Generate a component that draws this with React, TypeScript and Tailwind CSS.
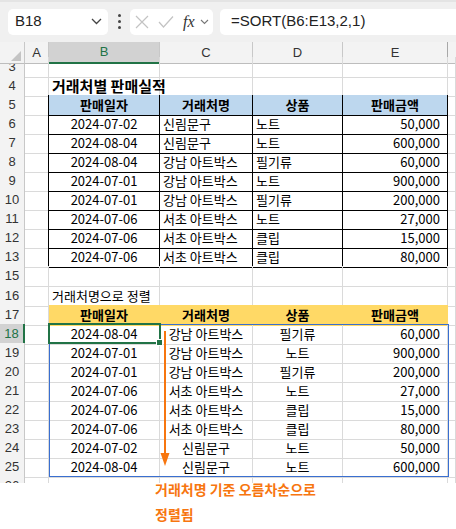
import React from "react";

type Cell = { t?: string; c?: string };

const COLS = "grid grid-cols-[25px_24px_111px_93px_90px_105px_8px]";
const G = "border-r border-b border-r-[#dadada] border-b-[#dadada]";
const KR = "font-['Noto_Sans_CJK_KR',sans-serif]";

const t1 = [
  ["2024-07-02", "신림문구", "노트", "50,000"],
  ["2024-08-04", "신림문구", "노트", "600,000"],
  ["2024-08-04", "강남 아트박스", "필기류", "60,000"],
  ["2024-07-01", "강남 아트박스", "노트", "900,000"],
  ["2024-07-01", "강남 아트박스", "필기류", "200,000"],
  ["2024-07-06", "서초 아트박스", "노트", "27,000"],
  ["2024-07-06", "서초 아트박스", "클립", "15,000"],
  ["2024-07-06", "서초 아트박스", "클립", "80,000"],
];

const t2 = [
  ["2024-08-04", "강남 아트박스", "필기류", "60,000"],
  ["2024-07-01", "강남 아트박스", "노트", "900,000"],
  ["2024-07-01", "강남 아트박스", "필기류", "200,000"],
  ["2024-07-06", "서초 아트박스", "노트", "27,000"],
  ["2024-07-06", "서초 아트박스", "클립", "15,000"],
  ["2024-07-06", "서초 아트박스", "클립", "80,000"],
  ["2024-07-02", "신림문구", "노트", "50,000"],
  ["2024-08-04", "신림문구", "노트", "600,000"],
];

function Row({
  n,
  cells,
  sel,
  h = "h-[19px]",
}: {
  n: string;
  cells: Cell[];
  sel?: boolean;
  h?: string;
}) {
  return (
    <div className={`${COLS} ${h}`}>
      <div
        className={
          sel
            ? "flex items-center justify-center border-b border-b-[#c8c8c8] border-r-2 border-r-[#217346] bg-[#d2d2d2] text-[13px] text-[#217346] font-['Liberation_Sans',sans-serif]"
            : "flex items-center justify-center border-b border-r border-b-[#d8d8d8] border-r-[#c8c8c8] bg-[#f3f3f3] text-[13px] text-[#333] font-['Liberation_Sans',sans-serif]"
        }
      >
        {n}
      </div>
      {cells.map((c, i) => (
        <div
          key={i}
          className={`flex items-center overflow-visible whitespace-nowrap text-[13px] leading-none text-black ${KR} ${
            c.c ?? G
          }`}
        >
          {c.t ?? ""}
        </div>
      ))}
    </div>
  );
}

const empty = (): Cell[] => [{}, {}, {}, {}, {}, {}];

const B1 = "border-r border-b border-black justify-center";
const L1 = "border-r border-b border-black justify-start pl-[3px]";
const R1 = "border-r border-b border-black justify-end pr-[7px]";

export default function App() {
  return (
    <div className="relative w-[456px] h-[529px] overflow-hidden bg-white">
      {/* formula bar */}
      <div className="h-[42px] bg-[#f0f0f0] border-t-2 border-t-[#e4e4e4] flex items-center gap-0 pb-[1px]">
        <div className="ml-[8px] w-[100px] h-[26px] bg-white rounded-[5px] flex items-center justify-between pl-[7px] pr-[6px]">
          <span className="text-[15px] text-[#222] font-['Liberation_Sans',sans-serif]">B18</span>
          <svg width="11" height="7" viewBox="0 0 11 7">
            <path d="M1 1 L5.5 5.5 L10 1" fill="none" stroke="#444" strokeWidth="1.3" />
          </svg>
        </div>
        <div className="w-[22px] h-[26px] flex flex-col items-center justify-center gap-[3px]">
          <div className="w-[3px] h-[3px] rounded-full bg-[#444]" />
          <div className="w-[3px] h-[3px] rounded-full bg-[#444]" />
          <div className="w-[3px] h-[3px] rounded-full bg-[#444]" />
        </div>
        <div className="w-[83px] h-[26px] bg-white rounded-[5px] flex items-center pl-[5px]">
          <svg width="14" height="14" viewBox="0 0 14 14">
            <path d="M1 1 L13 13 M13 1 L1 13" stroke="#c3c3c3" strokeWidth="1.2" />
          </svg>
          <svg width="16" height="14" viewBox="0 0 16 14" className="ml-[9px]">
            <path d="M1 7 L5.5 12 L15 1.5" fill="none" stroke="#c3c3c3" strokeWidth="1.2" />
          </svg>
          <span className="ml-[9px] text-[16px] italic text-[#333] font-['Liberation_Serif',serif] leading-none">fx</span>
          <svg width="9" height="6" viewBox="0 0 9 6" className="ml-[5px]">
            <path d="M1 1 L4.5 4.5 L8 1" fill="none" stroke="#777" strokeWidth="1.1" />
          </svg>
        </div>
        <div className="ml-[7px] flex-1 h-[26px] bg-white rounded-l-[5px] flex items-center pl-[11px]">
          <span className="text-[15px] text-[#222] font-['Liberation_Sans',sans-serif]">=SORT(B6:E13,2,1)</span>
        </div>
      </div>

      {/* sheet */}
      <div className="h-[441px] overflow-hidden">
        {/* column headers */}
        <div className={`${COLS} h-[15px] font-['Liberation_Sans',sans-serif] text-[13px] text-[#333]`}>
          <div className="relative bg-[#f3f3f3] border-r border-b border-r-[#c8c8c8] border-b-[#bdbdbd]">
            <svg width="10" height="10" viewBox="0 0 10 10" className="absolute right-[3px] bottom-[2px]">
              <path d="M10 0 L10 10 L0 10 Z" fill="#c4c4c4" />
            </svg>
          </div>
          <div className="flex items-center justify-center bg-[#f3f3f3] border-r border-b border-r-[#c8c8c8] border-b-[#bdbdbd]">A</div>
          <div className="flex items-center justify-center bg-[#d2d2d2] border-r border-r-[#c8c8c8] border-b-2 border-b-[#217346] text-[#217346]">B</div>
          <div className="flex items-center justify-center bg-[#f3f3f3] border-r border-b border-r-[#c8c8c8] border-b-[#bdbdbd]">C</div>
          <div className="flex items-center justify-center bg-[#f3f3f3] border-r border-b border-r-[#c8c8c8] border-b-[#bdbdbd]">D</div>
          <div className="flex items-center justify-center bg-[#f3f3f3] border-r border-b border-r-[#a8a8a8] border-b-[#bdbdbd]">E</div>
          <div className="bg-[#f3f3f3] border-b border-b-[#bdbdbd]" />
        </div>

        <Row n="3" cells={empty()} />
        <Row
          n="4"
          cells={[
            {},
            { t: "거래처별 판매실적", c: "border-r border-b border-r-[#dadada] border-b-black pl-[3px] text-[15px] font-bold" },
            { c: "border-r border-b border-r-[#dadada] border-b-black" },
            { c: "border-r border-b border-r-[#dadada] border-b-black" },
            { c: "border-r border-b border-r-[#dadada] border-b-black" },
            {},
          ]}
        />
        <Row
          n="5"
          cells={[
            { c: "border-r border-b border-r-black border-b-[#dadada]" },
            { t: "판매일자", c: "border-r border-b border-black justify-center bg-[#bdd7ee] font-bold" },
            { t: "거래처명", c: "border-r border-b border-black justify-center bg-[#bdd7ee] font-bold" },
            { t: "상품", c: "border-r border-b border-black justify-center bg-[#bdd7ee] font-bold" },
            { t: "판매금액", c: "border-r border-b border-black justify-center bg-[#bdd7ee] font-bold" },
            {},
          ]}
        />
        {t1.map((r, i) => (
          <Row
            key={"a" + i}
            n={String(6 + i)}
            cells={[
              { c: "border-r border-b border-r-black border-b-[#dadada]" },
              { t: r[0], c: B1 },
              { t: r[1], c: L1 },
              { t: r[2], c: L1 },
              { t: r[3], c: R1 },
              {},
            ]}
          />
        ))}
        <Row n="15" h="h-[20px]" cells={empty()} />
        <Row n="16" cells={[{}, { t: "거래처명으로 정렬", c: `${G} pl-[3px]` }, {}, {}, {}, {}]} />
        <Row
          n="17"
          cells={[
            {},
            { t: "판매일자", c: "border-r border-b border-[#ffd966] justify-center bg-[#ffd966] font-bold" },
            { t: "거래처명", c: "border-r border-b border-[#ffd966] justify-center bg-[#ffd966] font-bold" },
            { t: "상품", c: "border-r border-b border-[#ffd966] justify-center bg-[#ffd966] font-bold" },
            { t: "판매금액", c: "border-r border-b border-[#ffd966] justify-center bg-[#ffd966] font-bold" },
            {},
          ]}
        />
        {t2.map((r, i) => (
          <Row
            key={"b" + i}
            n={String(18 + i)}
            sel={i === 0}
            cells={[
              {},
              { t: r[0], c: `${G} justify-center` },
              { t: r[1], c: `${G} justify-center` },
              { t: r[2], c: `${G} justify-center` },
              { t: r[3], c: `${G} justify-end pr-[7px]` },
              {},
            ]}
          />
        ))}
        <Row n="26" cells={empty()} />
      </div>

      {/* spill range border */}
      <div className="absolute left-[49px] top-[324px] w-[400px] h-[153px] border border-[#3a6fd0] pointer-events-none" />
      {/* active cell */}
      <div className="absolute left-[48px] top-[323px] w-[113px] h-[21px] border-2 border-[#217346] pointer-events-none" />
      <div className="absolute left-[156px] top-[339px] w-[7px] h-[7px] bg-[#217346] border border-white" />

      {/* arrow */}
      <svg className="absolute left-[159px] top-[331px]" width="12" height="138" viewBox="0 0 12 138">
        <line x1="6" y1="0" x2="6" y2="124" stroke="#f7760f" strokeWidth="2" />
        <path d="M1.5 122 L10.5 122 L6 135 Z" fill="#f7760f" />
      </svg>

      {/* callout */}
      <div className="absolute left-[155px] top-[477px] flex flex-col text-[14px] font-bold leading-[25px] text-[#f7760f] font-['Noto_Sans_CJK_KR',sans-serif]">
        <span>거래처명 기준 오름차순으로</span>
        <span>정렬됨</span>
      </div>
    </div>
  );
}
